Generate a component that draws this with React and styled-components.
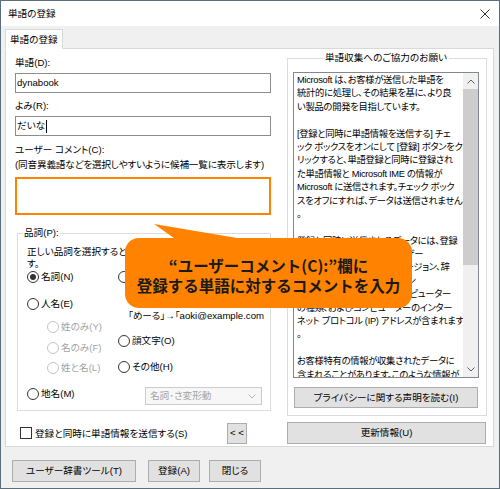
import React from "react";
import styled, { createGlobalStyle } from "styled-components";

const ORANGE = "#ff8300";

const noticeLines = [
  "Microsoft は、お客様が送信した単語を",
  "統計的に処理し、その結果を基に、より良",
  "い製品の開発を目指しています。",
  "",
  "[登録と同時に単語情報を送信する] チェ",
  "ック ボックスをオンにして [登録] ボタンをク",
  "リックすると、単語登録と同時に登録され",
  "た単語情報と Microsoft IME の情報が",
  "Microsoft に送信されます。チェック ボック",
  "スをオフにすれば、データは送信されません",
  "。",
  "",
  "登録と同時に送信されるデータには、登録",
  "された単語、よみ、品詞、ユーザー",
  "コメント、Microsoft IME のバージョン、辞",
  "書のバージョン、オペレーティン",
  "グ システムのバージョン、コンピューター",
  "の種類、およびコンピューターのインター",
  "ネット プロトコル (IP) アドレスが含まれます",
  "。",
  "",
  "お客様特有の情報が収集されたデータに",
  "含まれることがあります。このような情報が",
];

const GlobalStyle = createGlobalStyle`
  html, body {
    margin: 0;
    padding: 0;
    background: #fff;
  }
  body {
    font-family: "Liberation Sans", "Noto Sans CJK JP", sans-serif;
    font-size: 9.6px;
    color: #000;
    font-feature-settings: "palt";
  }
  * {
    box-sizing: border-box;
  }
`;

const Window = styled.div`
  position: relative;
  width: 500px;
  height: 489px;
  border: 1px solid #5b6e7c;
  background: #f0f0f0;
  display: flex;
  flex-direction: column;
  overflow: hidden;
`;

const TitleBar = styled.div`
  flex: none;
  height: 25px;
  background: #fff;
  display: flex;
  align-items: center;
  justify-content: space-between;
  padding: 0 9px 0 7px;
  line-height: 14px;
`;

const TabStrip = styled.div`
  display: flex;
  padding-left: 4px;
  margin-top: 3px;
  margin-bottom: -1px;
  position: relative;
  z-index: 1;
`;

const Tab = styled.div`
  height: 20px;
  padding: 0 4px;
  display: flex;
  align-items: center;
  background: #fff;
  border: 1px solid #d9d9d9;
  border-bottom-color: #fff;
`;

const Panel = styled.div`
  flex: none;
  margin: 0 5px 0 4px;
  height: 399px;
  background: #fff;
  border: 1px solid #d9d9d9;
  padding: 0 0 2px 9px;
  display: grid;
  grid-template-columns: 256px 200px;
  grid-template-rows: 367px 22px;
  column-gap: 16px;
  row-gap: 6px;
`;

const LeftCol = styled.div`
  display: flex;
  flex-direction: column;
  padding-top: 7px;
`;

const Label = styled.div`
  height: 14px;
  line-height: 14px;
  white-space: nowrap;
  margin-top: ${(p) => p.$mt || 0}px;
  letter-spacing: ${(p) => (p.$tight ? "-0.15px" : "normal")};
`;

const TextBox = styled.div`
  height: 20px;
  margin-top: 3px;
  border: 1px solid #8c8c8c;
  background: #fff;
  padding-left: 1px;
  display: flex;
  align-items: center;
  line-height: 14px;
`;

const Caret = styled.span`
  display: inline-block;
  width: 1px;
  height: 13px;
  background: #000;
  margin-left: 1px;
`;

const CommentBox = styled.div`
  height: 38px;
  margin-top: 5px;
  border: 2px solid ${ORANGE};
  background: #fff;
`;

const Group = styled.fieldset`
  margin: ${(p) => p.$margin};
  padding: ${(p) => p.$pad};
  width: ${(p) => p.$w}px;
  border: 1px solid #dcdcdc;
  min-width: 0;
  min-inline-size: 0;
`;

const Legend = styled.legend`
  line-height: 14px;
  padding: 0 ${(p) => (p.$center ? 2 : 1)}px;
  margin: ${(p) => (p.$center ? "0 auto" : "0 0 0 -4px")};
`;

const Desc = styled.div`
  height: 24px;
  line-height: 12px;
  white-space: nowrap;
  overflow: hidden;
`;

const RadioColumns = styled.div`
  display: flex;
`;

const RadioCol = styled.div`
  display: flex;
  flex-direction: column;
  width: ${(p) => (p.$w ? `${p.$w}px` : "auto")};
  flex: ${(p) => (p.$w ? "none" : "1")};
  min-width: 0;
  overflow: hidden;
`;

const RadioRow = styled.div`
  display: flex;
  align-items: center;
  gap: 2px;
  height: 14px;
  line-height: 14px;
  white-space: nowrap;
  flex: none;
  color: ${(p) => (p.$disabled ? "#a3a3a3" : "#000")};
  margin-top: ${(p) => p.$mt || 0}px;
  margin-left: ${(p) => p.$ml || 0}px;
  width: ${(p) => (p.$w ? `${p.$w}px` : "auto")};
`;

const Dot = styled.span`
  flex: none;
  width: 12px;
  height: 12px;
  border-radius: 50%;
  border: 1px solid ${(p) => (p.$disabled ? "#c4c4c4" : "#333")};
  background: #fff;
  display: flex;
  align-items: center;
  justify-content: center;

  &::after {
    content: "";
    width: 6px;
    height: 6px;
    border-radius: 50%;
    background: #333;
    display: ${(p) => (p.$checked ? "block" : "none")};
  }
`;

const Example = styled.div`
  height: 14px;
  line-height: 14px;
  white-space: nowrap;
  overflow: hidden;
  margin: ${(p) => p.$mt}px 0 0 10px;
`;

const BottomRow = styled.div`
  display: flex;
  align-items: flex-start;
  margin-top: 12px;
`;

const Select = styled.div`
  width: 117px;
  height: 18px;
  border: 1px solid #cccccc;
  background: #f7f7f7;
  color: #a3a3a3;
  display: flex;
  align-items: center;
  justify-content: space-between;
  padding: 0 5px 0 4px;
  line-height: 14px;
  white-space: nowrap;
`;

const NoticeBox = styled.div`
  width: 186px;
  height: 306px;
  border: 1px solid #828790;
  background: #fff;
  display: flex;
`;

const NoticeText = styled.div`
  flex: 1;
  min-width: 0;
  overflow: hidden;
  padding: 1px 0 0 3px;
  font-size: 9.3px;
  letter-spacing: -0.3px;
`;

const NoticeLine = styled.div`
  height: 13.4px;
  line-height: 13.4px;
  white-space: pre;
`;

const ScrollTrack = styled.div`
  flex: none;
  width: 15px;
  background: #f0f0f0;
  display: flex;
  flex-direction: column;
`;

const ScrollArrow = styled.div`
  flex: none;
  height: 16px;
  display: flex;
  align-items: center;
  justify-content: center;
  margin-top: ${(p) => (p.$bottom ? "auto" : "0")};
`;

const Thumb = styled.div`
  flex: none;
  height: ${(p) => p.$h}px;
  background: #cdcdcd;
`;

const Button = styled.button`
  font: inherit;
  font-feature-settings: inherit;
  color: #000;
  background: #e1e1e1;
  border: 1px solid #adadad;
  padding: 0;
  width: ${(p) => p.$w}px;
  height: ${(p) => p.$h || 22}px;
  margin: ${(p) => p.$margin || "0"};
  line-height: 14px;
  white-space: nowrap;
  flex: none;
`;

const CheckRow = styled.div`
  display: flex;
  align-items: center;
`;

const CheckBox = styled.span`
  flex: none;
  width: 12px;
  height: 12px;
  border: 1px solid #333;
  background: #fff;
  margin: 0 3px 0 5px;
`;

const BottomBar = styled.div`
  display: flex;
  padding: 13px 0 0 11px;
`;

const Callout = styled.div`
  position: absolute;
  left: 124px;
  top: 237px;
  width: 287px;
  height: 70px;
  background: ${ORANGE};
  border-radius: 14px;
  display: flex;
  flex-direction: column;
  align-items: center;
  justify-content: center;
  padding-top: 4px;
  font-family: "Noto Sans CJK JP", sans-serif;
  font-size: 15.5px;
  font-weight: 700;
  line-height: 20px;
  color: #1a1a1a;
  font-feature-settings: normal;
  white-space: nowrap;

  &::before {
    content: "";
    position: absolute;
    left: 29px;
    top: -14px;
    width: 89px;
    height: 15px;
    background: ${ORANGE};
    clip-path: polygon(0 0, 24% 100%, 100% 100%);
  }
`;

const CloseIcon = () => (
  <svg width="10" height="10" viewBox="0 0 10 10">
    <path d="M0.5 0.5 L9.5 9.5 M9.5 0.5 L0.5 9.5" stroke="#333" strokeWidth="1" />
  </svg>
);

const Chevron = ({ up, color = "#606060" }) => (
  <svg width="8" height="5" viewBox="0 0 8 5">
    <polyline
      points={up ? "0.5,4.5 4,1 7.5,4.5" : "0.5,0.5 4,4 7.5,0.5"}
      fill="none"
      stroke={color}
      strokeWidth="1"
    />
  </svg>
);

const Radio = ({ label, checked, disabled, mt, ml, w }) => (
  <RadioRow $disabled={disabled} $mt={mt} $ml={ml} $w={w}>
    <Dot $checked={checked} $disabled={disabled} />
    {label}
  </RadioRow>
);

export default function App() {
  return (
    <>
      <GlobalStyle />
      <Window>
        <TitleBar>
          <span>単語の登録</span>
          <CloseIcon />
        </TitleBar>
        <TabStrip>
          <Tab>単語の登録</Tab>
        </TabStrip>
        <Panel>
          <LeftCol>
            <Label>単語(D):</Label>
            <TextBox>dynabook</TextBox>
            <Label $mt={6}>よみ(R):</Label>
            <TextBox>
              だいな
              <Caret />
            </TextBox>
            <Label $mt={7}>ユーザー コメント(C):</Label>
            <Label $mt={1} $tight>
              (同音異義語などを選択しやすいように候補一覧に表示します)
            </Label>
            <CommentBox />
            <Group $w={254} $margin="11px 0 0 2px" $pad="6px 0 5px 9px">
              <Legend>品詞(P):</Legend>
              <Desc>
                正しい品詞を選択すると、変換候補が適切に表示されるようになりま
                <br />
                す。
              </Desc>
              <RadioColumns>
                <RadioCol $w={91}>
                  <Radio label="名詞(N)" checked />
                  <Radio label="人名(E)" mt={13} />
                  <Radio label="姓のみ(Y)" disabled mt={9} ml={20} />
                  <Radio label="名のみ(F)" disabled mt={7} ml={20} />
                  <Radio label="姓と名(L)" disabled mt={6} ml={20} />
                </RadioCol>
                <RadioCol>
                  <Radio label="短縮よみ(S)" />
                  <Example $mt={25}>「めーる」→「aoki@example.com</Example>
                  <Radio label="顔文字(O)" mt={11} />
                  <Radio label="その他(H)" mt={12} />
                </RadioCol>
              </RadioColumns>
              <BottomRow>
                <Radio label="地名(M)" w={118} />
                <Select>
                  名詞･さ変形動
                  <Chevron color="#b5b5b5" />
                </Select>
              </BottomRow>
            </Group>
          </LeftCol>

          <Group $w={200} $margin="2px 0 0 0" $pad="7px 7px 6px 5px">
            <Legend $center>単語収集へのご協力のお願い</Legend>
            <NoticeBox>
              <NoticeText>
                {noticeLines.map((line, i) => (
                  <NoticeLine key={i}>{line || "\u00a0"}</NoticeLine>
                ))}
              </NoticeText>
              <ScrollTrack>
                <ScrollArrow>
                  <Chevron up />
                </ScrollArrow>
                <Thumb $h={176} />
                <ScrollArrow $bottom>
                  <Chevron />
                </ScrollArrow>
              </ScrollTrack>
            </NoticeBox>
            <Button $w={184} $h={21} $margin="9px 0 0 1px">
              プライバシーに関する声明を読む(I)
            </Button>
          </Group>

          <CheckRow>
            <CheckBox />
            登録と同時に単語情報を送信する(S)
            <Button $w={20} $h={21} $margin="0 24px 0 auto">
              &lt; &lt;
            </Button>
          </CheckRow>
          <Button $w={199}>更新情報(U)</Button>
        </Panel>

        <BottomBar>
          <Button $w={124}>ユーザー辞書ツール(T)</Button>
          <Button $w={52} $margin="0 0 0 12px">
            登録(A)
          </Button>
          <Button $w={52} $margin="0 0 0 9px">
            閉じる
          </Button>
        </BottomBar>

        <Callout>
          <span>“ユーザーコメント(C):”欄に</span>
          <span>登録する単語に対するコメントを入力</span>
        </Callout>
      </Window>
    </>
  );
}
